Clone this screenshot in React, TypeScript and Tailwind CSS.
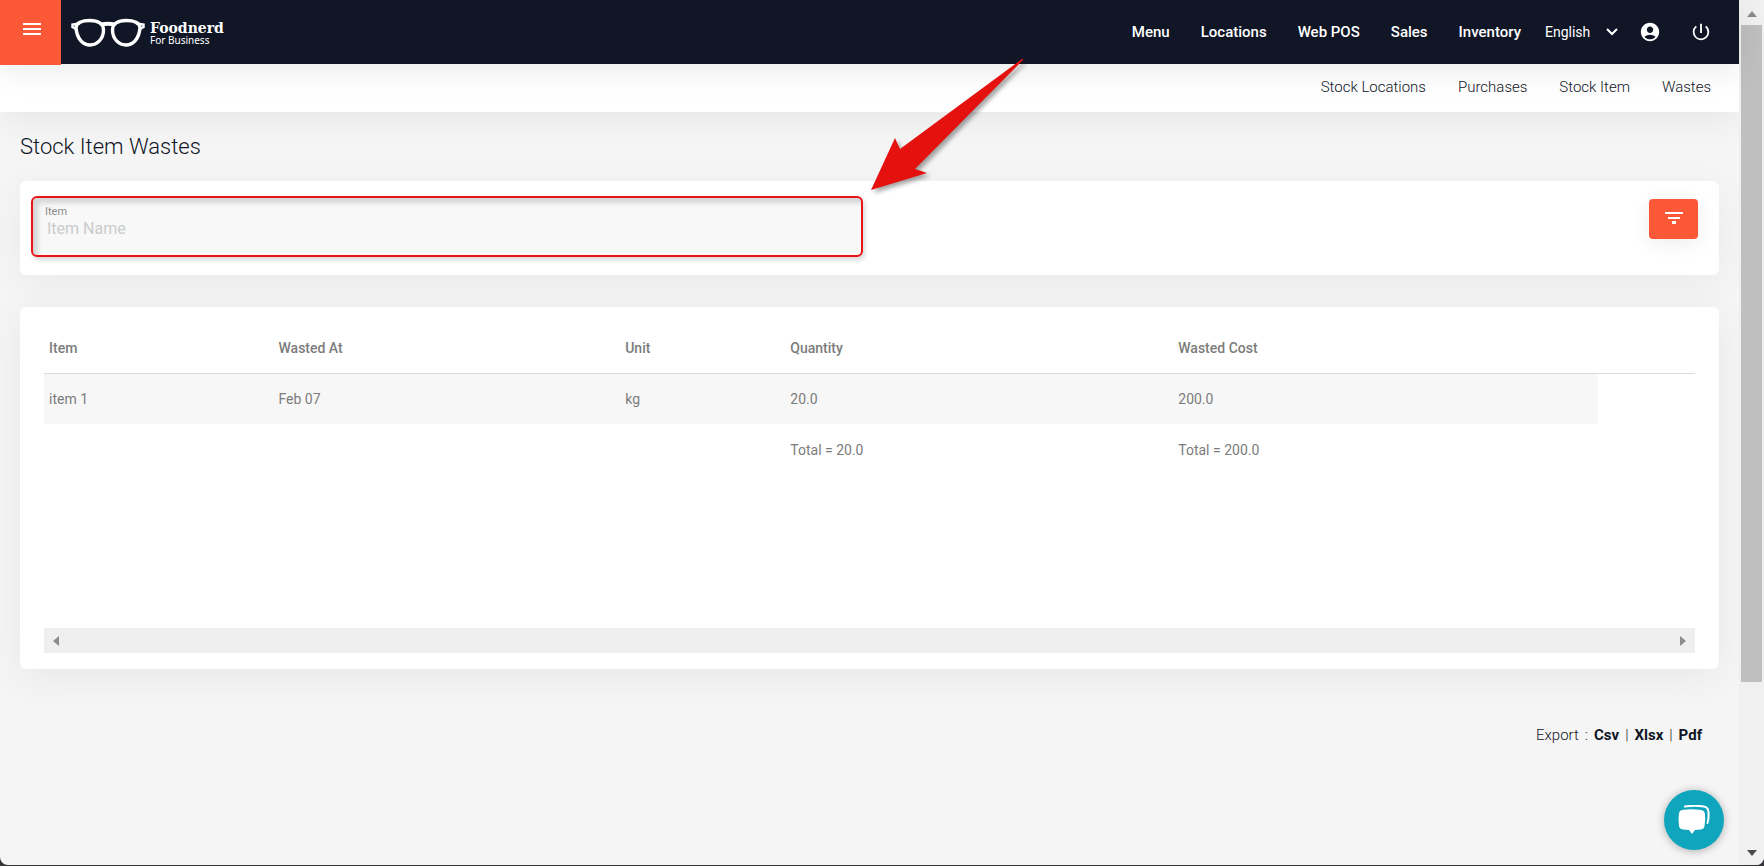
import { useState } from "react";
import { MdAccountCircle, MdMenu, MdPowerSettingsNew } from "react-icons/md";

const mainLinks = ["Menu", "Locations", "Web POS", "Sales", "Inventory"];
const stockLinks = ["Stock Locations", "Purchases", "Stock Item", "Wastes"];
const exportFormats = ["Csv", "Xlsx", "Pdf"];

const columns = [
  { label: "Item", width: "w-[13.9%]" },
  { label: "Wasted At", width: "w-[21%]" },
  { label: "Unit", width: "w-[10%]" },
  { label: "Quantity", width: "w-[23.5%]" },
  { label: "Wasted Cost", width: "w-[25.7%]" },
];

const wastes = [{ item: "item 1", wastedAt: "Feb 07", unit: "kg", quantity: "20.0", cost: "200.0" }];

function Logo() {
  return (
    <a href="#" className="flex items-center gap-1 text-white">
      <svg viewBox="0 0 76 30" className="h-[30px] w-[76px]" fill="none" stroke="currentColor">
        <path d="M6 10C6 5 12 2.500 20 2.500S33.500 6 33.500 12C33.500 21 27 27 20 27S7 21 6 10Z" strokeWidth="3.400" />
        <path d="M70 10C70 5 64 2.500 56 2.500S42.500 6 42.500 12C42.500 21 49 27 56 27S69 21 70 10Z" strokeWidth="3.400" />
        <path d="M31 6.500Q38 5 45 6.500" strokeWidth="4" />
        <path d="M10 5.500L2.500 6.500V9L6 11M66 5.500L73.500 6.500V9L70 11" strokeWidth="2.500" />
      </svg>
      <span className="flex flex-col">
        <span className="font-['DejaVu_Serif',serif] text-sm leading-[14px] font-bold">Foodnerd</span>
        <span className="font-['Noto_Sans',sans-serif] text-[10px] leading-[10px]">For Business</span>
      </span>
    </a>
  );
}

function Header() {
  return (
    <header className="relative z-10 flex h-16 shrink-0 items-center bg-[#101626] text-white shadow-[0_8px_32px_rgba(0,0,0,0.08)]">
      <button aria-label="Toggle menu" className="flex h-[65px] w-[61px] shrink-0 justify-center self-start bg-[#fa5837] pt-[17px] pl-[3px]">
        <MdMenu className="size-6" />
      </button>
      <div className="ml-[9px] pt-px">
        <Logo />
      </div>
      <nav className="ml-auto flex items-center gap-[31px] text-[15px] font-medium">
        {mainLinks.map((link) => (
          <a key={link} href="#">
            {link}
          </a>
        ))}
      </nav>
      <div className="relative ml-6 flex items-center">
        <select aria-label="Language" defaultValue="English" className="w-[73px] appearance-none bg-transparent text-sm">
          <option>English</option>
        </select>
        <svg viewBox="0 0 12 8" className="pointer-events-none absolute right-0 h-2 w-3" fill="none" stroke="currentColor" strokeWidth="2">
          <path d="M1 1l5 5 5-5" />
        </svg>
      </div>
      <button aria-label="Account" className="ml-[21px]">
        <MdAccountCircle className="size-[22px]" />
      </button>
      <button aria-label="Log out" className="mr-[27px] ml-[29px]">
        <MdPowerSettingsNew className="size-[22px]" />
      </button>
    </header>
  );
}

function SearchCard() {
  const [name, setName] = useState("");

  return (
    <form className="mt-[22px] flex justify-between rounded-md bg-white pt-[15px] pr-[21px] pb-[18px] pl-[11px] shadow-[0_8px_40px_rgba(0,0,0,0.05)]">
      <div className="relative w-[49.9%]">
        <div className="flex h-[61px] flex-col rounded-md border-2 border-[#e81416] bg-[#f8f8f8] px-3 pt-[7px] shadow-[inset_5px_5px_5px_rgba(0,0,0,0.14),2px_3px_5px_rgba(0,0,0,0.16)]">
          <label htmlFor="item-name" className="text-[11px] leading-[14px] text-[#8b8b8b]">
            Item
          </label>
          <input
            id="item-name"
            value={name}
            onChange={(e) => setName(e.target.value)}
            placeholder="Item Name"
            className="bg-transparent px-[2px] text-base leading-5 text-[#6f6f6f] outline-none placeholder:text-[#cacccd]"
          />
        </div>
        <svg viewBox="0 0 152 131" className="absolute bottom-full left-full z-20 mb-1.5 ml-2 h-[131px] w-[152px] overflow-visible drop-shadow-[3px_3px_2px_rgba(0,0,0,0.35)]">
          <path d="M0 131L24 79l5 11L151 0q2-1 1 1L44 110l12 4z" fill="#e5110f" />
        </svg>
      </div>
      <button type="button" aria-label="Filter" className="mt-[3px] flex h-10 w-[49px] justify-center rounded bg-[#fa5837] pt-3 text-white shadow-[0_4px_20px_rgba(0,0,0,0.08)]">
        <svg viewBox="0 0 18 13" className="h-[13px] w-[18px]" fill="currentColor">
          <path d="M0 1h18v2H0zM3 6h12v2H3zM7 10h4v3H7z" />
        </svg>
      </button>
    </form>
  );
}

function WastesTable() {
  return (
    <section className="mt-8 rounded-md bg-white px-6 pt-4 pb-4 shadow-[0_8px_40px_rgba(0,0,0,0.06)]">
      <div className="min-h-[305px]">
        <table className="w-full table-fixed text-left text-sm text-[#7c7c7c]">
          <thead>
            <tr className="h-[50px] border-b border-[#dcdcdc]">
              {columns.map((column) => (
                <th key={column.label} className={`${column.width} px-[5px] font-medium`}>
                  {column.label}
                </th>
              ))}
              <th />
            </tr>
          </thead>
          <tbody>
            {wastes.map((waste) => (
              <tr key={waste.item} className="h-[51px]">
                <td className="bg-[#f7f7f7] px-[5px]">{waste.item}</td>
                <td className="bg-[#f7f7f7] px-[5px]">{waste.wastedAt}</td>
                <td className="bg-[#f7f7f7] px-[5px]">{waste.unit}</td>
                <td className="bg-[#f7f7f7] px-[5px]">{waste.quantity}</td>
                <td className="bg-[#f7f7f7] px-[5px]">{waste.cost}</td>
              </tr>
            ))}
            <tr className="h-[51px]">
              <td colSpan={3} />
              <td className="px-[5px]">Total = 20.0</td>
              <td className="px-[5px]">Total = 200.0</td>
            </tr>
          </tbody>
        </table>
      </div>
      <div className="flex h-[25px] items-center justify-between bg-[#efefef] px-[9px] text-[#8c8c8c]">
        <svg viewBox="0 0 6 10" className="h-[10px] w-[6px]" fill="currentColor">
          <path d="M6 0v10L0 5z" />
        </svg>
        <svg viewBox="0 0 6 10" className="h-[10px] w-[6px]" fill="currentColor">
          <path d="M0 0v10l6-5z" />
        </svg>
      </div>
    </section>
  );
}

function PageScrollbar() {
  return (
    <div className="flex w-[25px] shrink-0 flex-col items-center bg-[#f0f0f0]">
      <div className="flex h-[25px] items-center pt-[2px]">
        <svg viewBox="0 0 10 6" className="h-[6px] w-[10px]" fill="#8c8c8c">
          <path d="M0 6h10L5 0z" />
        </svg>
      </div>
      <div className="flex w-full flex-1 flex-col items-center">
        <div className="h-[80.6%] w-[21px] bg-[#bfbfbf]" />
      </div>
      <div className="flex h-[25px] items-center">
        <svg viewBox="0 0 10 6" className="h-[6px] w-[10px]" fill="#4c4c4c">
          <path d="M0 0h10L5 6z" />
        </svg>
      </div>
    </div>
  );
}

export default function App() {
  return (
    <div className="flex h-screen min-h-[760px] flex-col bg-[#35363c] pb-px font-[Roboto,sans-serif] text-[#101626]">
      <div className="flex flex-1 overflow-hidden rounded-b-lg bg-[#f5f5f5]">
        <div className="flex min-w-0 flex-1 flex-col">
          <Header />
          <nav className="flex h-12 shrink-0 items-center justify-end gap-8 bg-white pr-7 pb-px text-[15px] font-light shadow-[0_8px_32px_rgba(0,0,0,0.06)]">
            {stockLinks.map((link) => (
              <a key={link} href="#">
                {link}
              </a>
            ))}
          </nav>
          <main className="px-5 pt-[22px]">
            <h1 className="text-[22px] leading-[25px] font-light">Stock Item Wastes</h1>
            <SearchCard />
            <WastesTable />
            <div className="mt-[55px] mr-[17px] flex justify-end gap-[6px] text-[15px] leading-[22px]">
              <span className="font-light">Export</span>
              <span className="font-light">:</span>
              {exportFormats.map((format, i) => (
                <span key={format} className="flex gap-[6px]">
                  {i > 0 && <span className="font-light">|</span>}
                  <a href="#" className="font-bold">
                    {format}
                  </a>
                </span>
              ))}
            </div>
          </main>
        </div>
        <PageScrollbar />
      </div>

      <button aria-label="Open chat" className="fixed right-10 bottom-4 z-20 flex size-[60px] items-center justify-center rounded-full bg-[#0fa5bd] shadow-[0_1px_8px_rgba(0,0,0,0.3)]">
        <svg viewBox="0 0 32 30" className="h-[30px] w-8">
          <path d="M7 1.500Q16 0 26 1.500Q30 2 30.500 7Q31 13 29.500 18" fill="none" stroke="#fff" strokeWidth="2" strokeLinecap="round" />
          <path d="M4 5Q13 3.500 23 5Q26.500 5.500 27 9Q27.500 15 26.500 21Q26 24 23 24.500L17 25L14 29L11 25L5 24.500Q1.500 24 1 21Q0 14 1 8Q1.500 5.500 4 5Z" fill="#fff" />
        </svg>
      </button>
    </div>
  );
}
